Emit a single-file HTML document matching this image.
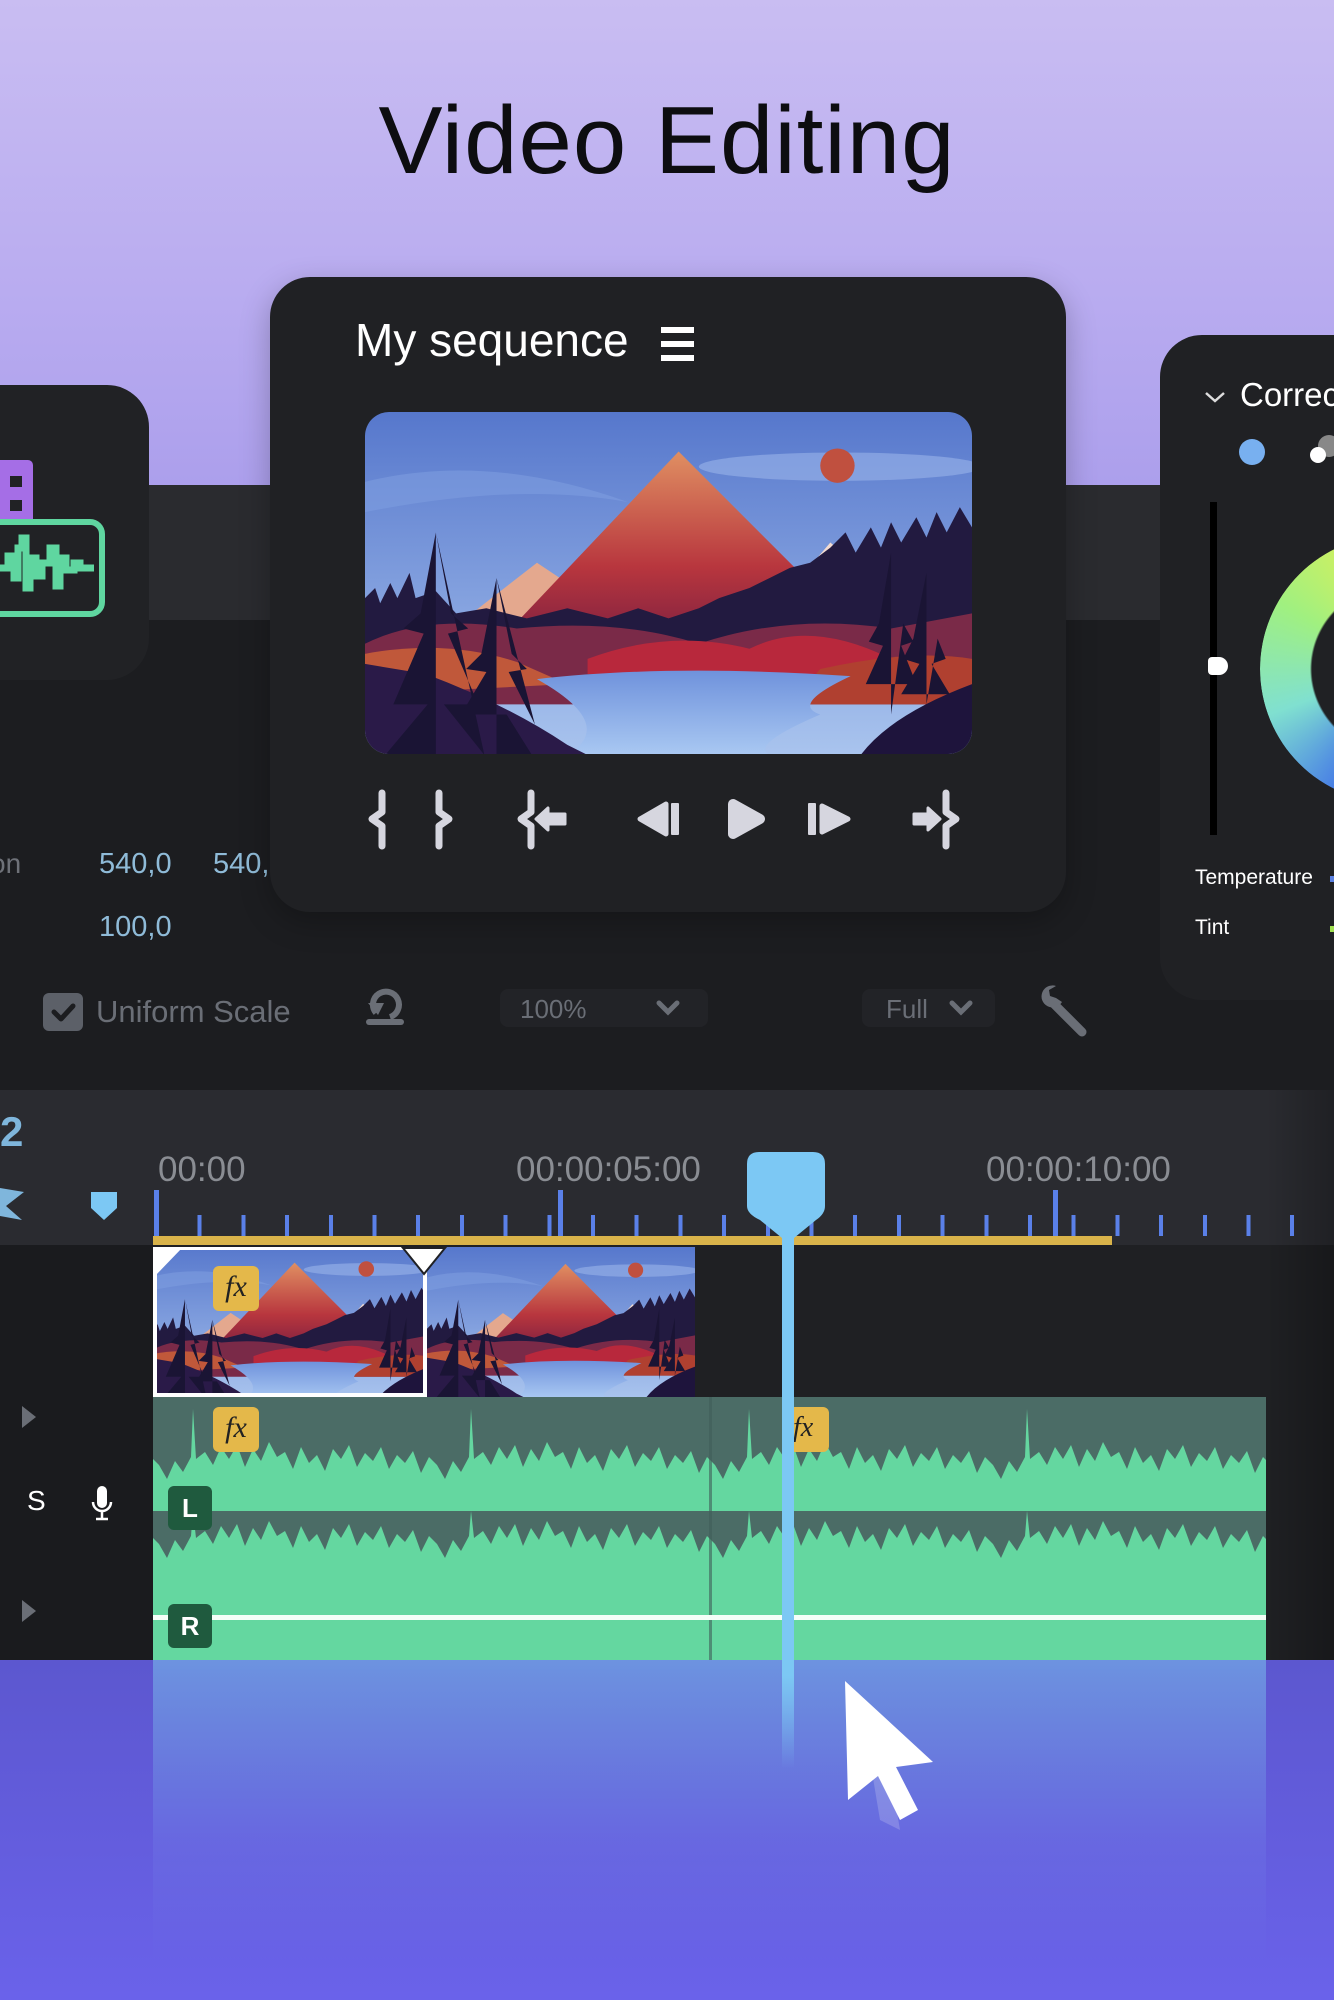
<!DOCTYPE html>
<html><head><meta charset="utf-8">
<style>
*{margin:0;padding:0;box-sizing:border-box}
html,body{width:1334px;height:2000px;overflow:hidden}
body{position:relative;background:#1c1d20;font-family:"Liberation Sans",sans-serif}
.a{position:absolute}
</style></head>
<body>
<div class="a" style="left:0;top:0;width:1334px;height:485px;background:linear-gradient(#c9bdf2,#b9acf0 60%,#ac9fec)"></div>
<div class="a" style="left:0;top:485px;width:1334px;height:135px;background:#2a2b2f"></div>
<div class="a" style="left:0;top:620px;width:1334px;height:470px;background:#1c1d20"></div>

<div class="a" style="left:0;top:86px;width:1334px;text-align:center;font-size:96px;color:#0d0d10;letter-spacing:1px">Video Editing</div>

<!-- left card -->
<div class="a" style="left:-60px;top:385px;width:209px;height:295px;background:#212225;border-radius:42px"></div>
<div class="a" style="left:0;top:460px;width:33px;height:62px;background:#a56ee6;border-radius:0 5px 0 0"></div>
<div class="a" style="left:10px;top:476px;width:12px;height:11px;background:#212225"></div>
<div class="a" style="left:10px;top:500px;width:12px;height:11px;background:#212225"></div>
<svg class="a" style="left:0;top:518px" width="110" height="102" viewBox="0 0 110 102">
<rect x="-20" y="4" width="122" height="92" rx="12" fill="#212225" stroke="#5fd6a0" stroke-width="6"/>
<path d="M0,50 H8 V38 H14 V60 H18 V30 H22 V20 H26 V70 H30 V40 H36 V58 H42 V45 H50 V30 H56 V68 H60 V40 H66 V52 H74 V45 H80 V50 H94" fill="none" stroke="#5fd6a0" stroke-width="7"/>
</svg>

<div class="a" style="left:-10px;top:848px;font-size:28px;color:#6e7178">on</div>
<div class="a" style="left:99px;top:848px;font-size:29px;color:#8fbbd8">540,0</div>
<div class="a" style="left:213px;top:848px;font-size:29px;color:#8fbbd8">540,</div>
<div class="a" style="left:99px;top:911px;font-size:29px;color:#8fbbd8">100,0</div>
<div class="a" style="left:43px;top:993px;width:40px;height:38px;background:#5c6068;border-radius:6px"></div>
<svg class="a" style="left:43px;top:993px" width="40" height="38"><path d="M11,19 L18,26 L30,13" fill="none" stroke="#1c1d20" stroke-width="5" stroke-linecap="round" stroke-linejoin="round"/></svg>
<div class="a" style="left:96px;top:994px;font-size:31px;color:#6a6e76">Uniform Scale</div>
<svg class="a" style="left:362px;top:985px" width="48" height="45" viewBox="0 0 48 45"><path d="M14,28 A13,13 0 1 1 28,32" fill="none" stroke="#6a6e76" stroke-width="6"/><path d="M6,18 L16,30 L22,18 Z" fill="#6a6e76"/><rect x="4" y="34" width="38" height="6" rx="3" fill="#6a6e76"/></svg>
<div class="a" style="left:500px;top:989px;width:208px;height:38px;background:#222327;border-radius:8px"></div>
<div class="a" style="left:520px;top:994px;font-size:26px;color:#6a6e76">100%</div>
<svg class="a" style="left:655px;top:998px" width="26" height="20"><path d="M4,5 L13,14 L22,5" fill="none" stroke="#6a6e76" stroke-width="5" stroke-linecap="round"/></svg>
<div class="a" style="left:862px;top:989px;width:133px;height:38px;background:#222327;border-radius:8px"></div>
<div class="a" style="left:886px;top:994px;font-size:26px;color:#6a6e76">Full</div>
<svg class="a" style="left:948px;top:998px" width="26" height="20"><path d="M4,5 L13,14 L22,5" fill="none" stroke="#6a6e76" stroke-width="5" stroke-linecap="round"/></svg>
<svg class="a" style="left:1036px;top:982px" width="56" height="56" viewBox="0 0 56 56"><path d="M18,22 L46,50" stroke="#6a6e76" stroke-width="9" stroke-linecap="round"/><path d="M20,4 A11,11 0 1 0 26,20 L20,16 L14,14 L13,8Z" fill="#6a6e76"/></svg>

<svg width="0" height="0" style="position:absolute">
<defs>
<linearGradient id="sky" x1="0" y1="0" x2="0" y2="1"><stop offset="0" stop-color="#5677cc"/><stop offset="1" stop-color="#a9c4ee"/></linearGradient>
<linearGradient id="mtn" x1="0" y1="0" x2="0" y2="1"><stop offset="0" stop-color="#e08f62"/><stop offset=".6" stop-color="#b8363e"/><stop offset="1" stop-color="#7e2040"/></linearGradient>
<linearGradient id="lake" x1="0" y1="0" x2="0" y2="1"><stop offset="0" stop-color="#6f92dc"/><stop offset="1" stop-color="#a9c8f2"/></linearGradient>
<symbol id="land" viewBox="0 0 600 340" preserveAspectRatio="xMidYMid slice">
<rect width="600" height="340" fill="url(#sky)"/>
<ellipse cx="470" cy="55" rx="140" ry="14" fill="#9ab4ea" opacity=".6"/>
<path d="M0,70 Q120,40 260,90 Q150,70 0,100Z" fill="#7d9ce0" opacity=".6"/>
<circle cx="467" cy="54" r="17" fill="#c0503f"/>
<path d="M80,220 L170,150 L230,190Z" fill="#e4a88e"/>
<path d="M400,200 L460,130 L540,200Z" fill="#f2dad0"/>
<path d="M130,230 L310,40 L500,230Z" fill="url(#mtn)"/>
<path d="M0,185 L10,175 L15,190 L25,170 L32,185 L44,160 L50,185 L70,178 L90,200 L120,195 L160,205 L200,195 L240,205 L270,195 L300,205 L330,195 L350,185 L380,175 L400,165 L420,155 L440,150 L460,135 L475,120 L485,140 L500,115 L510,135 L520,110 L530,130 L545,105 L555,125 L565,100 L575,120 L588,95 L600,115 L600,240 L0,240Z" fill="#221a40"/>
<path d="M0,230 Q60,200 150,215 Q250,205 330,230 Q420,200 520,215 L600,200 L600,290 L0,290Z" fill="#7a2a48"/>
<path d="M220,245 Q300,215 380,235 Q440,205 520,245 L520,260 L220,260Z" fill="#b8283c"/>
<path d="M0,240 Q80,225 150,248 L200,270 L0,280Z" fill="#c0583a"/>
<path d="M450,255 Q540,235 600,245 L600,290 L420,290Z" fill="#b04030"/>
<path d="M170,265 Q300,250 480,262 Q420,290 450,300 Q380,330 400,340 L200,340 Q250,310 170,265Z" fill="url(#lake)"/>
<path d="M0,250 L60,260 Q140,290 200,330 L220,340 L0,340Z" fill="#2a1a48"/>
<path d="M600,270 Q520,300 490,340 L600,340Z" fill="#1e143c"/>
<path d="M70,340 L70,120 L55,200 L38,215 L58,220 L28,290 L62,290 L20,340Z M70,120 L85,200 L102,215 L82,220 L112,290 L78,290 L118,340Z" fill="#1a1434"/>
<path d="M130,340 L130,165 L115,240 L100,255 L120,258 L95,300 L140,300 L165,340Z M130,165 L145,240 L160,255 L142,258 L168,310Z" fill="#1a1434"/>
<path d="M520,300 L520,140 L508,210 L498,228 L512,232 L495,270 L545,270 L530,232 L542,228 L532,210Z" fill="#1a1434"/>
<path d="M555,290 L555,160 L542,225 L532,245 L548,250 L530,280 L578,280 L560,250 L574,245 L566,225Z" fill="#1a1434"/>
</symbol>
</defs>
</svg>

<!-- main card -->
<div class="a" style="left:270px;top:277px;width:796px;height:635px;background:#202124;border-radius:40px;box-shadow:0 10px 30px rgba(0,0,0,.25)"></div>
<div class="a" style="left:355px;top:313px;font-size:46px;color:#fff">My sequence</div>
<div class="a" style="left:661px;top:327px;width:33px;height:6px;background:#fff"></div>
<div class="a" style="left:661px;top:341px;width:33px;height:6px;background:#fff"></div>
<div class="a" style="left:661px;top:355px;width:33px;height:6px;background:#fff"></div>
<svg class="a" style="left:365px;top:412px;border-radius:24px" width="607" height="342"><use href="#land" width="607" height="342"/></svg>
<svg class="a" style="left:360px;top:785px" width="620" height="70" viewBox="360 785 620 70" fill="#d6d6df" stroke="#d6d6df" stroke-linecap="round" stroke-linejoin="round">
<path d="M382,793 V812 L372,819 L382,826 V846" fill="none" stroke-width="7"/>
<path d="M439,793 V812 L449,819 L439,826 V846" fill="none" stroke-width="7"/>
<path d="M531,793 V812 L521,819 L531,826 V846" fill="none" stroke-width="7"/>
<path d="M536,819 L548,808 V814 H565 V824 H548 V830Z" stroke-width="3"/>
<path d="M640,819 L666,804 V834Z" stroke-width="5"/><rect x="672" y="804" width="6" height="30" stroke-width="2"/>
<path d="M733,804 L760,819 L733,834Z" stroke-width="10"/>
<rect x="809" y="804" width="6" height="30" stroke-width="2"/><path d="M822,806 L848,819 L822,832Z" stroke-width="5"/>
<path d="M946,793 V812 L956,819 L946,826 V846" fill="none" stroke-width="7"/>
<path d="M940,819 L928,808 V814 H914 V824 H928 V830Z" stroke-width="3"/>
</svg>

<!-- right card -->
<div class="a" style="left:1160px;top:335px;width:220px;height:665px;background:#202124;border-radius:42px"></div>
<svg class="a" style="left:1203px;top:388px" width="24" height="18"><path d="M3,5 L12,13 L21,5" fill="none" stroke="#ddd" stroke-width="2.5"/></svg>
<div class="a" style="left:1240px;top:376px;font-size:33px;color:#fff;white-space:nowrap">Correc</div>
<div class="a" style="left:1239px;top:439px;width:26px;height:26px;border-radius:50%;background:#78b0f0"></div>
<div class="a" style="left:1318px;top:435px;width:22px;height:22px;border-radius:50%;background:#888"></div>
<div class="a" style="left:1310px;top:447px;width:16px;height:16px;border-radius:50%;background:#fff"></div>
<div class="a" style="left:1210px;top:502px;width:7px;height:333px;background:#000"></div>
<div class="a" style="left:1208px;top:657px;width:20px;height:18px;background:#fff;border-radius:4px 9px 9px 4px"></div>
<div class="a" style="left:1260px;top:535px;width:268px;height:268px;border-radius:50%;background:conic-gradient(from 0deg,#f0e040,#f5a040,#e05060,#a040d0,#4060e0,#4070e8 200deg,#80e0d0 250deg,#a0f080 300deg,#d0f060 340deg,#f0e040);-webkit-mask:radial-gradient(circle,transparent 82px,#000 84px);mask:radial-gradient(circle,transparent 82px,#000 84px)"></div>
<div class="a" style="left:1195px;top:866px;font-size:21px;color:#fff">Temperature</div>
<div class="a" style="left:1195px;top:916px;font-size:21px;color:#fff">Tint</div>
<div class="a" style="left:1330px;top:876px;width:4px;height:6px;background:#5a80e0"></div>
<div class="a" style="left:1330px;top:926px;width:4px;height:6px;background:#a0e050"></div>

<!-- timeline -->
<div class="a" style="left:0;top:1090px;width:1334px;height:155px;background:#2a2b30"></div>
<div class="a" style="left:0;top:1245px;width:1334px;height:415px;background:#1f2023"></div>
<div class="a" style="left:0;top:1245px;width:153px;height:415px;background:#1a1b1e"></div>
<div class="a" style="left:1266px;top:1090px;width:68px;height:570px;background:linear-gradient(90deg,rgba(0,0,0,0),rgba(0,0,0,.25))"></div>
<div class="a" style="left:0;top:1108px;font-size:42px;color:#7fb6dc;font-weight:bold">2</div>
<svg class="a" style="left:0;top:1180px" width="30" height="50"><path d="M0,8 L24,12 L6,26 L22,40 L0,36Z" fill="#7fb6dc"/></svg>
<svg class="a" style="left:89px;top:1190px" width="30" height="32"><path d="M2,2 H28 V18 L15,30 L2,18Z" fill="#7cc8f4"/></svg>
<div class="a" style="left:158px;top:1150px;font-size:35px;color:#8a8d93">00:00</div>
<div class="a" style="left:516px;top:1150px;font-size:35px;color:#8a8d93">00:00:05:00</div>
<div class="a" style="left:986px;top:1150px;font-size:35px;color:#8a8d93">00:00:10:00</div>
<div class="a" style="left:154px;top:1215px;width:1180px;height:21px;background:repeating-linear-gradient(90deg,#5a80e8 0 4px,transparent 4px 43.7px)"></div>
<div class="a" style="left:154px;top:1190px;width:5px;height:46px;background:#5a80e8"></div>
<div class="a" style="left:558px;top:1190px;width:5px;height:46px;background:#5a80e8"></div>
<div class="a" style="left:1053px;top:1190px;width:5px;height:46px;background:#5a80e8"></div>
<div class="a" style="left:153px;top:1236px;width:959px;height:9px;background:#d9b34a"></div>

<svg class="a" style="left:153px;top:1247px" width="274" height="150"><use href="#land" width="274" height="150"/></svg>
<svg class="a" style="left:427px;top:1247px" width="268" height="150"><use href="#land" width="268" height="150"/></svg>
<div class="a" style="left:153px;top:1247px;width:274px;height:150px;border:4px solid #fff;border-top-width:3px"></div>
<svg class="a" style="left:150px;top:1246px" width="300" height="36"><path d="M3,2 L32,2 L5,30Z" fill="#fff"/><path d="M253,2 L295,2 L274,28Z" fill="#fff" stroke="#202124" stroke-width="2"/></svg>
<div class="a" style="left:213px;top:1266px;width:46px;height:45px;background:#e4b84a;border-radius:6px;font:italic 30px 'Liberation Serif',serif;color:#222;text-align:center;line-height:42px">fx</div>

<svg class="a" style="left:153px;top:1397px" width="1113" height="263" viewBox="0 0 1113 263">
<defs>
<pattern id="wv" width="278" height="114" patternUnits="userSpaceOnUse" x="30">
<polygon points="0,75 8,60 10,12 13,62 22,55 30,68 38,50 46,62 54,48 62,70 70,52 78,64 86,45 94,60 102,55 110,72 118,50 126,66 134,58 142,74 150,52 158,62 166,48 174,70 182,56 190,64 198,50 206,72 214,58 222,66 230,54 238,76 246,60 254,68 262,82 270,64 278,75 278,114 0,114" fill="#64d7a0"/>
</pattern>
<pattern id="wv2" width="278" height="149" patternUnits="userSpaceOnUse" x="30" y="114">
<polygon points="0,40 8,25 10,0 13,27 22,20 30,33 38,15 46,27 54,13 62,35 70,17 78,29 86,10 94,25 102,20 110,37 118,15 126,31 134,23 142,39 150,17 158,27 166,13 174,35 182,21 190,29 198,15 206,37 214,23 222,31 230,19 238,41 246,25 254,33 262,47 270,29 278,40 278,149 0,149" fill="#64d7a0"/>
</pattern>
</defs>
<rect width="1113" height="263" fill="#4b6c66"/>
<rect width="1113" height="114" fill="url(#wv)"/>
<rect y="114" width="1113" height="149" fill="url(#wv2)"/>
<rect x="556" y="0" width="3" height="263" fill="#3f5e58" opacity=".6"/>
<rect y="218" width="1113" height="5" fill="#f4fff8"/>
</svg>
<div class="a" style="left:213px;top:1407px;width:46px;height:45px;background:#e4b84a;border-radius:6px;font:italic 30px 'Liberation Serif',serif;color:#222;text-align:center;line-height:42px">fx</div>
<div class="a" style="left:793px;top:1407px;width:36px;height:45px;background:#e4b84a;border-radius:0 6px 6px 0;font:italic 28px 'Liberation Serif',serif;color:#222;text-align:left;line-height:42px">fx</div>
<div class="a" style="left:168px;top:1486px;width:44px;height:44px;background:#1f5a3e;border-radius:6px;font:bold 26px 'Liberation Sans',sans-serif;color:#fff;text-align:center;line-height:44px">L</div>
<div class="a" style="left:168px;top:1604px;width:44px;height:44px;background:#1f5a3e;border-radius:6px;font:bold 26px 'Liberation Sans',sans-serif;color:#fff;text-align:center;line-height:44px">R</div>
<svg class="a" style="left:20px;top:1404px" width="20" height="26"><path d="M2,2 L16,13 L2,24Z" fill="#6a6e76"/></svg>
<svg class="a" style="left:20px;top:1598px" width="20" height="26"><path d="M2,2 L16,13 L2,24Z" fill="#6a6e76"/></svg>
<div class="a" style="left:27px;top:1485px;font-size:28px;color:#fff">S</div>
<svg class="a" style="left:90px;top:1484px" width="24" height="40"><rect x="7" y="2" width="10" height="22" rx="5" fill="#fff"/><path d="M3,18 A9,9 0 0 0 21,18 M12,27 V34 M6,35 H18" fill="none" stroke="#fff" stroke-width="2.5"/></svg>

<div class="a" style="left:0;top:1660px;width:1334px;height:340px;background:linear-gradient(#5c57cf,#6a62ea)"></div>
<div class="a" style="left:153px;top:1660px;width:1113px;height:300px;background:linear-gradient(#6d93e0,rgba(110,120,230,0.4) 60%,rgba(106,98,234,0))"></div>

<svg class="a" style="left:740px;top:1148px" width="100" height="660">
<defs><linearGradient id="ph" x1="0" y1="0" x2="0" y2="1"><stop offset=".85" stop-color="#7cc8f4"/><stop offset="1" stop-color="#7cc8f4" stop-opacity="0"/></linearGradient></defs>
<path d="M19,4 H73 Q85,4 85,16 V58 Q85,66 76,72 L54,90 V620 H42 V90 L20,72 Q7,66 7,58 V16 Q7,4 19,4Z" fill="url(#ph)"/>
</svg>
<svg class="a" style="left:830px;top:1670px" width="120" height="220">
<path d="M40,90 L50,150 L70,160 L60,100Z" fill="#fff" opacity=".18"/>
<path d="M15,11 L103,92 L66,97 L88,140 L70,150 L48,106 L18,130Z" fill="#fff"/>
</svg>
</body></html>
